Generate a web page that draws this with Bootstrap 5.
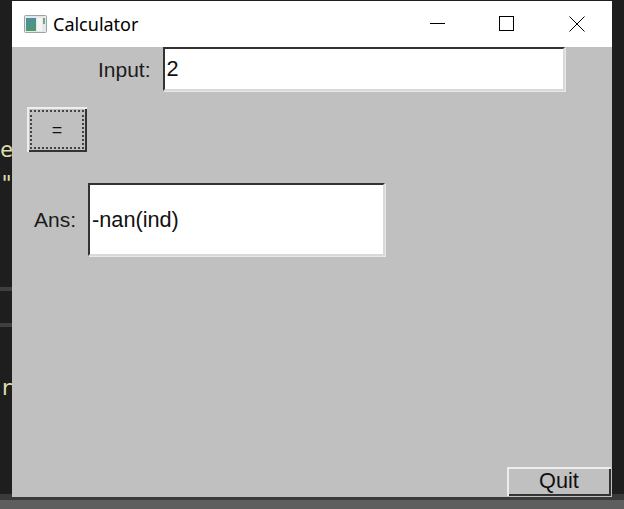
<!DOCTYPE html>
<html lang="en">
<head>
  <meta charset="UTF-8">
  <title>Calculator</title>
  <link href="https://cdn.jsdelivr.net/npm/bootstrap@5.3.0/dist/css/bootstrap.min.css" rel="stylesheet">
  <style>
    html, body { height: 509px; overflow: hidden; background: #1e1e1e; }
    body { font-family: "Liberation Sans", Arial, sans-serif; color: #111; }
    .screen { height: 509px; }
    .top-gap { height: 1px; }
    .side-strip { width: 12px; overflow: hidden; font-family: "DejaVu Sans Mono", monospace; font-size: 22px; line-height: 26px; color: #dcdcaa; }
    .win { width: 600px; height: 496px; }
    .titlebar { height: 46px; background: #fff; }
    .app-title { font-family: "Noto Sans", sans-serif; font-size: 18px; color: #000; margin-left: 6px; line-height: 44px; }
    .app-icon { margin-left: 12px; }
    .win-btn { width: 70px; height: 46px; }
    .win-btn-min { width: 68px; }
    .client { height: 450px; background: #c0c0c0; font-size: 21px; }
    .field-label { line-height: 1; color: #1c1c1c; }
    .tk-entry {
      display: block; padding: 0 0 0 2px; color: #111; background: #fff; font-size: 21.7px; outline: 0; border-radius: 0;
      border: 2px solid; border-color: #333 #d9d9d9 #d9d9d9 #333;
      box-shadow: 1px 1px 0 #e8e8e8;
    }
    .entry-input { width: 402px; height: 44px; margin-left: 12px; }
    .entry-ans { width: 297px; height: 73px; margin-left: 12px; }
    .row-input { padding-left: 86px; }
    .row-ans { padding-left: 22px; margin-top: 31px; }
    .tk-btn {
      background: #c0c0c0; color: #111; border: 0; border-radius: 0; padding: 0; font-size: 21.7px; line-height: 1;
      box-shadow: inset 2px 2px 0 #eeeeee, inset -2px -2px 0 #333;
    }
    .btn-eq { width: 60px; height: 45px; margin: 16px 0 0 15px; padding: 3px; font-size: 18px; }
    .btn-eq span { display: flex; align-items: center; justify-content: center; height: 100%; border: 2px dotted #444; }
    .btn-quit { width: 104px; height: 29px; margin-right: 1px; margin-bottom: 1px; padding-bottom: 1px; }
    .strip-e { margin-top: 137px; }
    .strip-q { margin-top: 8px; }
    .strip-line { height: 4px; background: #3f3f3f; }
    .strip-line-a { margin-top: 90px; }
    .strip-line-b { margin-top: 32px; }
    .strip-r { margin-top: 48px; }
    .strip-end { height: 3px; background: #3a3a3c; }
    .band-a { height: 3px; background: #3a3a3c; }
    .band-b { height: 9px; background: #5e5e5e; }
  </style>
</head>
<body>
  <div class="screen d-flex flex-column">
    <div class="d-flex flex-grow-0">
      <div class="side-strip flex-shrink-0 d-flex flex-column">
        <div class="strip-e">e</div>
        <div class="strip-q">"</div>
        <div class="strip-line strip-line-a"></div>
        <div class="strip-line strip-line-b"></div>
        <div class="strip-r">r</div>
        <div class="strip-end mt-auto"></div>
      </div>
      <div class="flex-shrink-0">
        <div class="top-gap"></div>
        <div class="win d-flex flex-column">
          <div class="titlebar d-flex align-items-center">
            <svg class="app-icon" width="23" height="19" viewBox="0 0 23 19">
              <defs><linearGradient id="ig" x1="0" y1="0" x2="0" y2="1"><stop offset="0" stop-color="#4d8f9c"/><stop offset="1" stop-color="#4f9a6c"/></linearGradient></defs>
              <rect x=".5" y=".5" width="22" height="17" rx="1" fill="#e4e8ea" stroke="#9aa3a8"/>
              <rect x="2" y="3" width="10" height="13" fill="url(#ig)"/>
              <rect x="13" y="3" width="5" height="13" fill="#f4f5f5"/>
              <rect x="19" y="3" width="2" height="6" fill="#6fa88a"/>
            </svg>
            <span class="app-title">Calculator</span>
            <div class="ms-auto d-flex">
              <div class="win-btn win-btn-min d-flex align-items-center justify-content-center">
                <svg width="16" height="16" viewBox="0 0 16 16"><path d="M0 7.5H15" stroke="#000" fill="none"/></svg>
              </div>
              <div class="win-btn d-flex align-items-center justify-content-center">
                <svg width="16" height="16" viewBox="0 0 16 16"><rect x=".5" y=".5" width="14" height="14" stroke="#000" fill="none"/></svg>
              </div>
              <div class="win-btn d-flex align-items-center justify-content-center">
                <svg width="16" height="16" viewBox="0 0 16 16"><path d="M.5 .5L15.5 15.5M15.5 .5L.5 15.5" stroke="#000" fill="none"/></svg>
              </div>
            </div>
          </div>
          <div class="client d-flex flex-column">
            <div class="row-input d-flex align-items-center">
              <span class="field-label">Input:</span>
              <input class="tk-entry entry-input" type="text" value="2">
            </div>
            <div><button class="tk-btn btn-eq" type="button"><span>=</span></button></div>
            <div class="row-ans d-flex align-items-center">
              <span class="field-label">Ans:</span>
              <input class="tk-entry entry-ans" type="text" value="-nan(ind)">
            </div>
            <div class="mt-auto d-flex justify-content-end">
              <button class="tk-btn btn-quit" type="button">Quit</button>
            </div>
          </div>
        </div>
      </div>
      <div class="side-strip flex-shrink-0 d-flex flex-column">
        <div class="strip-end mt-auto"></div>
      </div>
    </div>
    <div class="band-a"></div>
    <div class="band-b"></div>
  </div>
  <script src="https://cdn.jsdelivr.net/npm/bootstrap@5.3.0/dist/js/bootstrap.bundle.min.js"></script>
</body>
</html>
